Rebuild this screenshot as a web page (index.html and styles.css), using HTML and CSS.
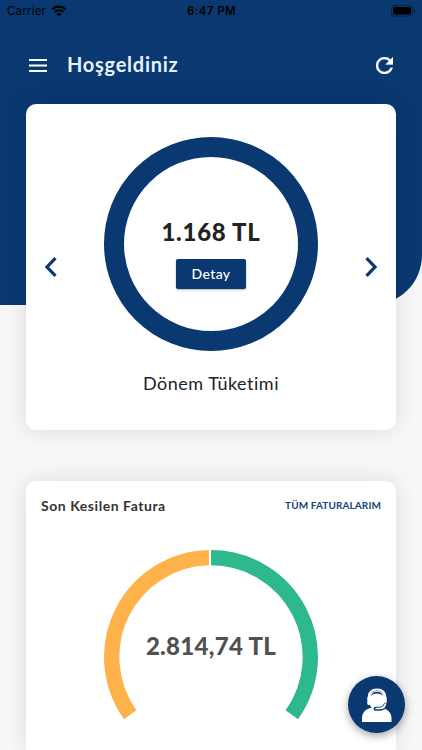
FILE: index.html
```
<!DOCTYPE html>
<html lang="tr">
<head>
    <meta charset="UTF-8">
    <meta name="viewport" content="width=device-width, initial-scale=1.0">
    <title>Hoşgeldiniz</title>
    <link rel="stylesheet" href="styles.css">
</head>
<body>
    <div class="hero-bg"></div>

    <div class="status-bar">
        <div class="carrier">
            <span>Carrier</span>
            <svg class="wifi" viewBox="0 0 16 12">
                <path d="M1.2 4.4a9.8 9.8 0 0 1 13.6 0M3.7 7a6.2 6.2 0 0 1 8.6 0" fill="none" stroke="#000" stroke-width="2.1"/>
                <path d="M8 11.6 5.4 9a3.8 3.8 0 0 1 5.2 0z"/>
            </svg>
        </div>
        <span class="time">6:47 PM</span>
        <div class="battery-box">
            <svg class="battery" viewBox="0 0 25 12">
                <rect x=".5" y=".5" width="21" height="10.6" rx="3" fill="none" stroke="#000" stroke-opacity=".4"/>
                <rect x="2" y="2" width="18" height="7.6" rx="1.8"/>
                <path d="M23 4v4c1.6-.6 1.6-3.4 0-4z" fill-opacity=".5"/>
            </svg>
        </div>
    </div>

    <header>
        <svg class="menu-icon" viewBox="0 0 18 13">
            <path d="M0 1h18M0 6.5h18M0 12h18" stroke="#fff" stroke-width="2"/>
        </svg>
        <h1>Hoşgeldiniz</h1>
        <svg class="refresh-icon" viewBox="4 4 16 16">
            <path d="M17.65 6.35A7.96 7.96 0 0 0 12 4a8 8 0 1 0 7.73 10h-2.08A6 6 0 1 1 12 6c1.66 0 3.14.69 4.22 1.78L13 11h7V4l-2.35 2.35z" fill="#fff" stroke="#fff" stroke-width=".3"/>
        </svg>
    </header>

    <main>
        <section class="card usage-card">
            <svg class="arrow" viewBox="0 0 12 20">
                <path d="M10.5 1.2 2 10l8.500 8.800" fill="none" stroke="#093970" stroke-width="3.2"/>
            </svg>
            <div class="usage">
                <div class="ring">
                    <strong>1.168 TL</strong>
                    <button>Detay</button>
                </div>
                <p>Dönem Tüketimi</p>
            </div>
            <svg class="arrow" viewBox="0 0 12 20">
                <path d="M1.5 1.2 10 10l-8.500 8.800" fill="none" stroke="#093970" stroke-width="3.2"/>
            </svg>
        </section>

        <section class="card bill-card">
            <div class="card-head">
                <h2>Son Kesilen Fatura</h2>
                <a href="#">TÜM FATURALARIM</a>
            </div>
            <div class="gauge">
                <svg viewBox="0 0 214 214">
                    <path d="M26.2 164.7A99.3 99.3 0 0 1 105 7.700" stroke="#ffb14a"/>
                    <path d="M107 7.7A99.3 99.3 0 0 1 187.8 164.7" stroke="#2eb88e"/>
                </svg>
                <strong>2.814,74 TL</strong>
            </div>
        </section>
    </main>

    <!-- live support -->
    <a class="support" href="#">
        <svg viewBox="0 0 30 34">
            <g fill="#fff">
                <path d="M0 34v-3.500C0 24.500 3.500 21.300 8.500 20h12c5 1.300 9 4.500 9 10.500V34z"/>
                <path d="M7.500 10C7.500 5 10.500 3 15 3s7.500 2 7.500 7v4c0 4.500-3.500 8.500-7.500 8.500S7.500 18.500 7.500 14z"/>
                <rect x="5.300" y="8.500" width="3.500" height="8.500" rx="1.500"/>
                <rect x="21.200" y="8.500" width="3.500" height="8.500" rx="1.500"/>
            </g>
            <path d="M6.600 10C6.600 4.500 9.700 1.400 15 1.400s8.400 3.100 8.400 8.600" fill="none" stroke="#fff" stroke-width="2"/>
            <path d="M8.600 8.500C9.600 5.200 11.700 3.700 15 3.700s5.400 1.500 6.400 4.800C19.700 6.500 18 5.600 15 5.600S10.300 6.500 8.600 8.500z" fill="#093970"/>
            <path d="M13.500 20.700h4.200c3 0 5-1.300 5.800-4" fill="none" stroke="#093970" stroke-width="4" stroke-linecap="round"/>
            <path d="M14.200 20.500h3.500c3 0 5-1.300 5.600-4.500" fill="none" stroke="#fff" stroke-width="1.700" stroke-linecap="round"/>
        </svg>
    </a>
</body>
</html>
```
FILE: styles.css
```
* {
    box-sizing: border-box;
}
body {
    font-family: Lato, 'Open Sans', sans-serif;
    background-color: #f8f8f8;
    margin: 0;
    height: 750px;
    position: relative;
    overflow: hidden;
}
h1, h2, p {
    margin: 0;
}
svg {
    display: block;
}
a {
    text-decoration: none;
}
.hero-bg {
    position: absolute;
    top: 0;
    left: 0;
    width: 100%;
    height: 305px;
    background-color: #093970;
    border-bottom-right-radius: 50px;
    z-index: -1;
}

.status-bar {
    display: grid;
    grid-template-columns: 1fr auto 1fr;
    align-items: center;
    height: 22px;
    padding: 0 6px 0 7px;
    font-family: Inter, sans-serif;
    font-size: 11.5px;
    color: #000;
}
.carrier {
    display: flex;
    align-items: center;
    gap: 5px;
    letter-spacing: 0.2px;
}
.wifi {
    width: 16px;
    height: 12px;
}
.time {
    font-weight: 600;
    letter-spacing: 0.4px;
}
.battery-box {
    display: flex;
    justify-content: flex-end;
}
.battery {
    width: 25px;
    height: 12px;
}

header {
    display: flex;
    align-items: center;
    height: 82px;
    padding: 4px 29px 0;
}
.menu-icon {
    width: 18px;
    height: 13px;
}
h1 {
    margin: -2px 0 0 20px;
    font-size: 20px;
    font-weight: 700;
    letter-spacing: 0.75px;
    color: #e9f1fb;
}
.refresh-icon {
    width: 17px;
    height: 17px;
    margin-left: auto;
}

main {
    display: flex;
    flex-direction: column;
    gap: 51px;
    padding: 0 26px;
}
.card {
    background-color: #fff;
    border-radius: 10px;
    box-shadow: 0 0 26px rgba(0, 0, 0, 0.12);
}
.usage-card {
    display: flex;
    align-items: center;
    justify-content: space-between;
    height: 326px;
    padding: 0 19px;
}
.arrow {
    width: 12px;
    height: 20px;
}
.usage {
    display: flex;
    flex-direction: column;
    align-items: center;
    gap: 19px;
    padding-bottom: 1px;
}
.ring {
    display: flex;
    flex-direction: column;
    align-items: center;
    justify-content: center;
    gap: 12px;
    width: 214px;
    height: 214px;
    padding-top: 17px;
    border: 20.5px solid #093970;
    border-radius: 50%;
}
.ring strong {
    font-size: 24px;
    font-weight: 900;
    line-height: 30px;
    letter-spacing: 0.7px;
    color: #222;
}
.ring button {
    width: 70px;
    height: 30px;
    padding: 0;
    border: 0;
    border-radius: 2px;
    background-color: #093970;
    box-shadow: 0 1px 2px rgba(0, 0, 0, 0.3);
    font: 500 14px Lato, sans-serif;
    letter-spacing: 0.4px;
    color: #fff;
}
.usage p {
    font-size: 18px;
    line-height: 26px;
    letter-spacing: 0.5px;
    color: #222;
}

.bill-card {
    height: 269px;
    padding: 14px 15px 0;
    border-radius: 10px 10px 0 0;
}
.card-head {
    display: flex;
    align-items: center;
    justify-content: space-between;
    height: 20px;
}
.card-head h2 {
    font-size: 14px;
    font-weight: 700;
    letter-spacing: 0.55px;
    color: #333;
}
.card-head a {
    margin-top: -1px;
    font-size: 10px;
    font-weight: 700;
    letter-spacing: 0.1px;
    color: #174376;
}
.gauge {
    display: grid;
    place-items: center;
    width: 214px;
    height: 214px;
    margin: 35px auto 0;
}
.gauge svg,
.gauge strong {
    grid-area: 1 / 1;
}
.gauge svg {
    width: 214px;
    height: 214px;
    fill: none;
    stroke-width: 15.3px;
}
.gauge strong {
    padding-bottom: 24px;
    font-size: 24px;
    font-weight: 900;
    letter-spacing: 0.3px;
    color: #505050;
}

.support {
    position: absolute;
    left: 348px;
    top: 676px;
    display: grid;
    place-items: center;
    width: 57px;
    height: 57px;
    border-radius: 50%;
    background-color: #093970;
    box-shadow: 0 3px 8px rgba(0, 0, 0, 0.35);
}
.support svg {
    width: 30px;
    height: 34px;
}
```
